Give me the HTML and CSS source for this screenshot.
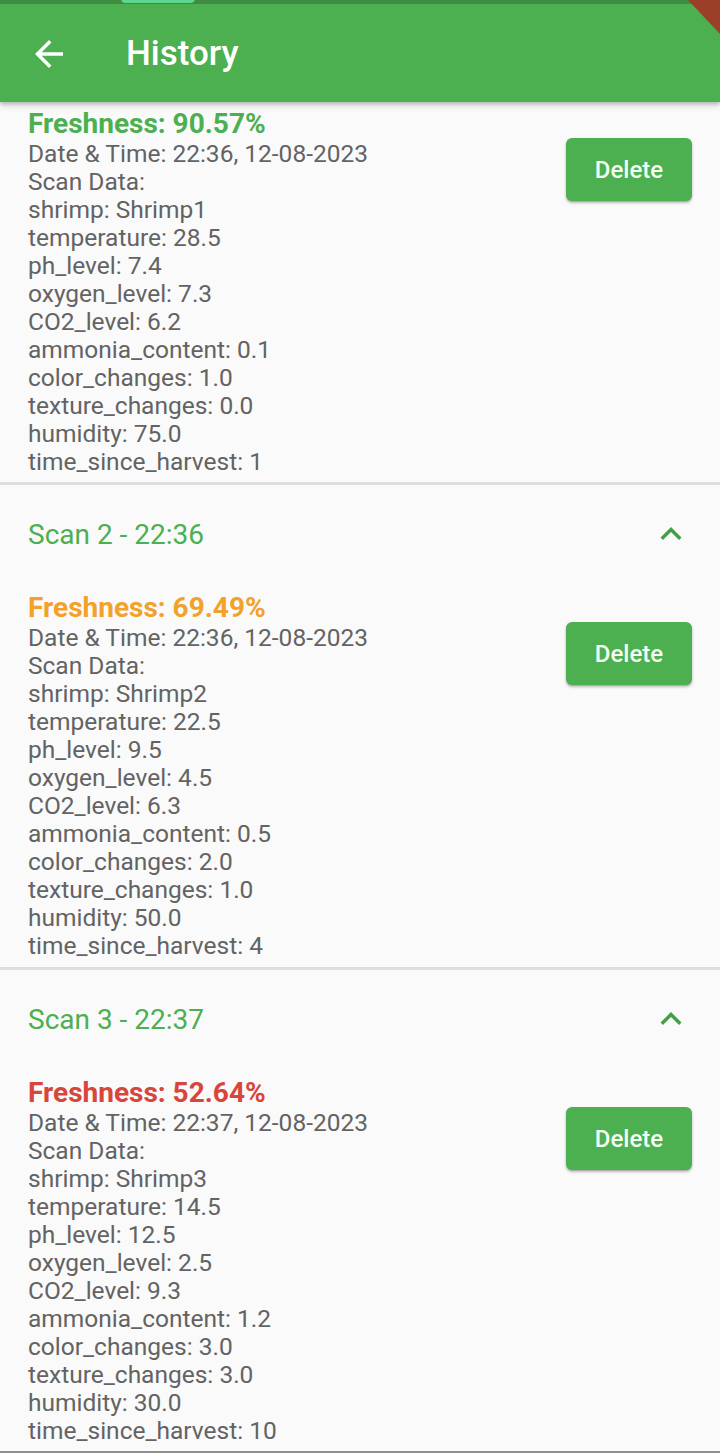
FILE: index.html
```html
<!DOCTYPE html>
<html>
<head>
<meta charset="utf-8">
<link rel="stylesheet" href="styles.css">
</head>
<body>
<div class="screen">
  <header class="appbar">
    <div class="status"><span class="pill"></span></div>
    <div class="bar">
      <svg class="back" viewBox="0 0 24 24" width="42" height="42"><path d="M20 11H7.83l5.59-5.59L12 4l-8 8 8 8 1.41-1.41L7.83 13H20v-2z" fill="#fff"/></svg>
      <h1 class="title">History</h1>
    </div>
    <span class="corner"></span>
  </header>

  <main class="list">
    <section class="item first">
      <div class="content">
        <div class="data">
          <div class="fresh good">Freshness: 90.57%</div>
          <div>Date &amp; Time: 22:36, 12-08-2023</div>
          <div>Scan Data:</div>
          <div>shrimp: Shrimp1</div>
          <div>temperature: 28.5</div>
          <div>ph_level: 7.4</div>
          <div>oxygen_level: 7.3</div>
          <div>CO2_level: 6.2</div>
          <div>ammonia_content: 0.1</div>
          <div>color_changes: 1.0</div>
          <div>texture_changes: 0.0</div>
          <div>humidity: 75.0</div>
          <div>time_since_harvest: 1</div>
        </div>
        <button class="delete">Delete</button>
      </div>
    </section>

    <section class="item">
      <div class="head">
        <span class="head-title">Scan 2 - 22:36</span>
        <svg class="chev" viewBox="0 0 24 24" width="42" height="42"><path d="M12 8l-6 6 1.41 1.41L12 10.83l4.59 4.58L18 14z" fill="#43a047"/></svg>
      </div>
      <div class="content">
        <div class="data">
          <div class="fresh mid">Freshness: 69.49%</div>
          <div>Date &amp; Time: 22:36, 12-08-2023</div>
          <div>Scan Data:</div>
          <div>shrimp: Shrimp2</div>
          <div>temperature: 22.5</div>
          <div>ph_level: 9.5</div>
          <div>oxygen_level: 4.5</div>
          <div>CO2_level: 6.3</div>
          <div>ammonia_content: 0.5</div>
          <div>color_changes: 2.0</div>
          <div>texture_changes: 1.0</div>
          <div>humidity: 50.0</div>
          <div>time_since_harvest: 4</div>
        </div>
        <button class="delete">Delete</button>
      </div>
    </section>

    <section class="item last">
      <div class="head">
        <span class="head-title">Scan 3 - 22:37</span>
        <svg class="chev" viewBox="0 0 24 24" width="42" height="42"><path d="M12 8l-6 6 1.41 1.41L12 10.83l4.59 4.58L18 14z" fill="#43a047"/></svg>
      </div>
      <div class="content">
        <div class="data">
          <div class="fresh bad">Freshness: 52.64%</div>
          <div>Date &amp; Time: 22:37, 12-08-2023</div>
          <div>Scan Data:</div>
          <div>shrimp: Shrimp3</div>
          <div>temperature: 14.5</div>
          <div>ph_level: 12.5</div>
          <div>oxygen_level: 2.5</div>
          <div>CO2_level: 9.3</div>
          <div>ammonia_content: 1.2</div>
          <div>color_changes: 3.0</div>
          <div>texture_changes: 3.0</div>
          <div>humidity: 30.0</div>
          <div>time_since_harvest: 10</div>
        </div>
        <button class="delete">Delete</button>
      </div>
    </section>
    <div class="bottom-line"></div>
  </main>
</div>
</body>
</html>
```

FILE: styles.css
```css
* { box-sizing: border-box; }
html, body {
  margin: 0;
  padding: 0;
  background: #fafafa;
}
body {
  font-family: Roboto, "Noto Sans", "Liberation Sans", sans-serif;
  width: 720px;
  height: 1453px;
  overflow: hidden;
}
.screen {
  position: relative;
  width: 720px;
  height: 1453px;
  overflow: hidden;
}
.appbar {
  position: relative;
  z-index: 2;
  background: #4caf50;
  height: 102px;
  box-shadow: 0 2px 4px rgba(0,0,0,0.22), 0 4px 8px rgba(0,0,0,0.10);
  overflow: hidden;
}
.status {
  height: 4px;
  background: #3f8b42;
  position: relative;
}
.pill {
  position: absolute;
  left: 121px;
  top: -6px;
  width: 74px;
  height: 9px;
  border-radius: 5px;
  background: #5fd690;
}
.corner {
  position: absolute;
  right: 0;
  top: 0;
  width: 32px;
  height: 34px;
  background: #9c3f29;
  clip-path: polygon(0 0, 100% 0, 100% 100%);
}
.bar {
  height: 98px;
  display: flex;
  align-items: center;
  padding-left: 28px;
  padding-top: 2px;
}
.back {
  display: block;
  flex: none;
}
.title {
  margin: 0 0 0 56px;
  font-size: 35px;
  font-weight: 500;
  color: #fff;
  line-height: 40px;
}
.list {
  display: flex;
  flex-direction: column;
}
.item {
  border-top: 3px solid #dedede;
  padding-bottom: 7px;
}
.item.first {
  border-top: none;
  padding-top: 5px;
  padding-bottom: 6px;
}
.item.last {
  padding-bottom: 6px;
}
.head {
  height: 100px;
  display: flex;
  align-items: center;
  justify-content: space-between;
  padding: 0 28px;
}
.head-title {
  font-size: 28px;
  color: #4caf50;
  line-height: 32px;
}
.chev {
  display: block;
  margin-top: -2px;
}
.item .content {
  display: flex;
  justify-content: space-between;
  align-items: flex-start;
  padding: 0 28px;
}
.item:not(.first) .content {
  padding-top: 6px;
}
.data {
  font-size: 24.5px;
  line-height: 28px;
  color: #636363;
}
.fresh {
  font-size: 28px;
  font-weight: 700;
  line-height: 33px;
}
.fresh.good { color: #4caf50; }
.fresh.mid { color: #f2a12b; }
.fresh.bad { color: #d8453a; }
.delete {
  margin-top: 31px;
  width: 126px;
  height: 63px;
  border: none;
  border-radius: 6px;
  background: #4caf50;
  color: #f4fff4;
  font-family: Roboto, "Noto Sans", sans-serif;
  font-size: 24px;
  font-weight: 500;
  box-shadow: 0 2px 3px rgba(0,0,0,0.25), 0 1px 1px rgba(0,0,0,0.12);
  padding: 0;
}
.bottom-line {
  height: 3px;
  background: #8f8f8f;
}
```
